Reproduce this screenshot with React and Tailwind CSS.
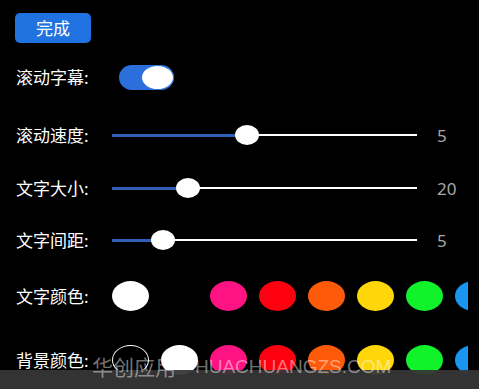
import React from "react";

const sliders = [
  { label: "滚动速度:", pos: 135, value: "5" },
  { label: "文字大小:", pos: 76, value: "20" },
  { label: "文字间距:", pos: 51, value: "5" },
];

const palette = ["#ff1282", "#ff0010", "#ff5a0a", "#ffd60a", "#10f22a", "#1a96f0"];

function Dot({ color, outline }) {
  return (
    <div
      className={`w-[37px] h-[30px] shrink-0 rounded-[50%] ${outline ? "border border-white" : ""}`}
      style={{ backgroundColor: color }}
    />
  );
}

function SliderRow({ label, pos, value, className }) {
  return (
    <div className={`flex items-center h-[20px] ${className}`}>
      <span className="w-[96px] text-[17px] text-white leading-none">{label}</span>
      <div className="relative w-[305px] h-[20px] flex items-center">
        <div className="w-full h-[2px] bg-white" />
        <div className="absolute left-0 h-[3px] bg-[#2f5fb8]" style={{ width: pos }} />
        <div
          className="absolute top-0 w-[24px] h-[20px] rounded-[50%] bg-white"
          style={{ left: pos - 12 }}
        />
      </div>
      <span className="ml-[20px] text-[17px] text-[#a8a8a8] leading-none">{value}</span>
    </div>
  );
}

export default function App() {
  return (
    <div
      className="relative w-[479px] h-[389px] bg-black overflow-hidden"
      style={{ fontFamily: '"Noto Sans", "Noto Sans CJK SC", sans-serif' }}
    >
      <div className="pl-[16px] pt-[13px]">
        <button className="ml-[-1px] w-[76px] h-[30px] rounded-[5px] bg-[#1f72e0] text-white text-[17px] leading-none">
          完成
        </button>

        <div className="flex items-center h-[25px] mt-[22px]">
          <span className="w-[103px] text-[17px] text-white leading-none">滚动字幕:</span>
          <div className="w-[55px] h-[25px] rounded-full bg-[#2a6fdb] flex justify-end">
            <div className="w-[33px] h-[25px] rounded-[50%] bg-white border border-[#2a6fdb]" />
          </div>
        </div>

        <SliderRow {...sliders[0]} className="mt-[35px]" />
        <SliderRow {...sliders[1]} className="mt-[33px]" />
        <SliderRow {...sliders[2]} className="mt-[32px]" />

        <div className="flex items-center h-[30px] mt-[31px]">
          <span className="w-[96px] shrink-0 text-[17px] text-white leading-none">文字颜色:</span>
          <div className="flex gap-[12px] w-[356px] overflow-hidden">
            <Dot color="#ffffff" />
            <Dot color="#000000" />
            {palette.map((c) => (
              <Dot key={c} color={c} />
            ))}
          </div>
        </div>

        <div className="flex items-center h-[30px] mt-[34px]">
          <span className="w-[96px] shrink-0 text-[17px] text-white leading-none">背景颜色:</span>
          <div className="flex gap-[12px] w-[356px] overflow-hidden">
            <Dot color="#000000" outline />
            <Dot color="#ffffff" />
            {palette.map((c) => (
              <Dot key={c} color={c} />
            ))}
          </div>
        </div>
      </div>

      <div className="absolute left-0 bottom-0 w-full h-[19px] bg-[#363636]/95" />
      <div className="absolute left-[92px] top-[356px] flex items-center h-[21px] text-white/45 whitespace-nowrap leading-none">
        <span className="text-[21px]" style={{ fontFamily: '"Noto Sans CJK SC", sans-serif' }}>
          华创应用
        </span>
        <span className="ml-[2px] w-[14px] text-center text-[14px]">•</span>
        <span
          className="ml-[3px] text-[19px]"
          style={{ fontFamily: '"Liberation Sans", sans-serif' }}
        >
          HUACHUANGZS.COM
        </span>
      </div>
    </div>
  );
}
